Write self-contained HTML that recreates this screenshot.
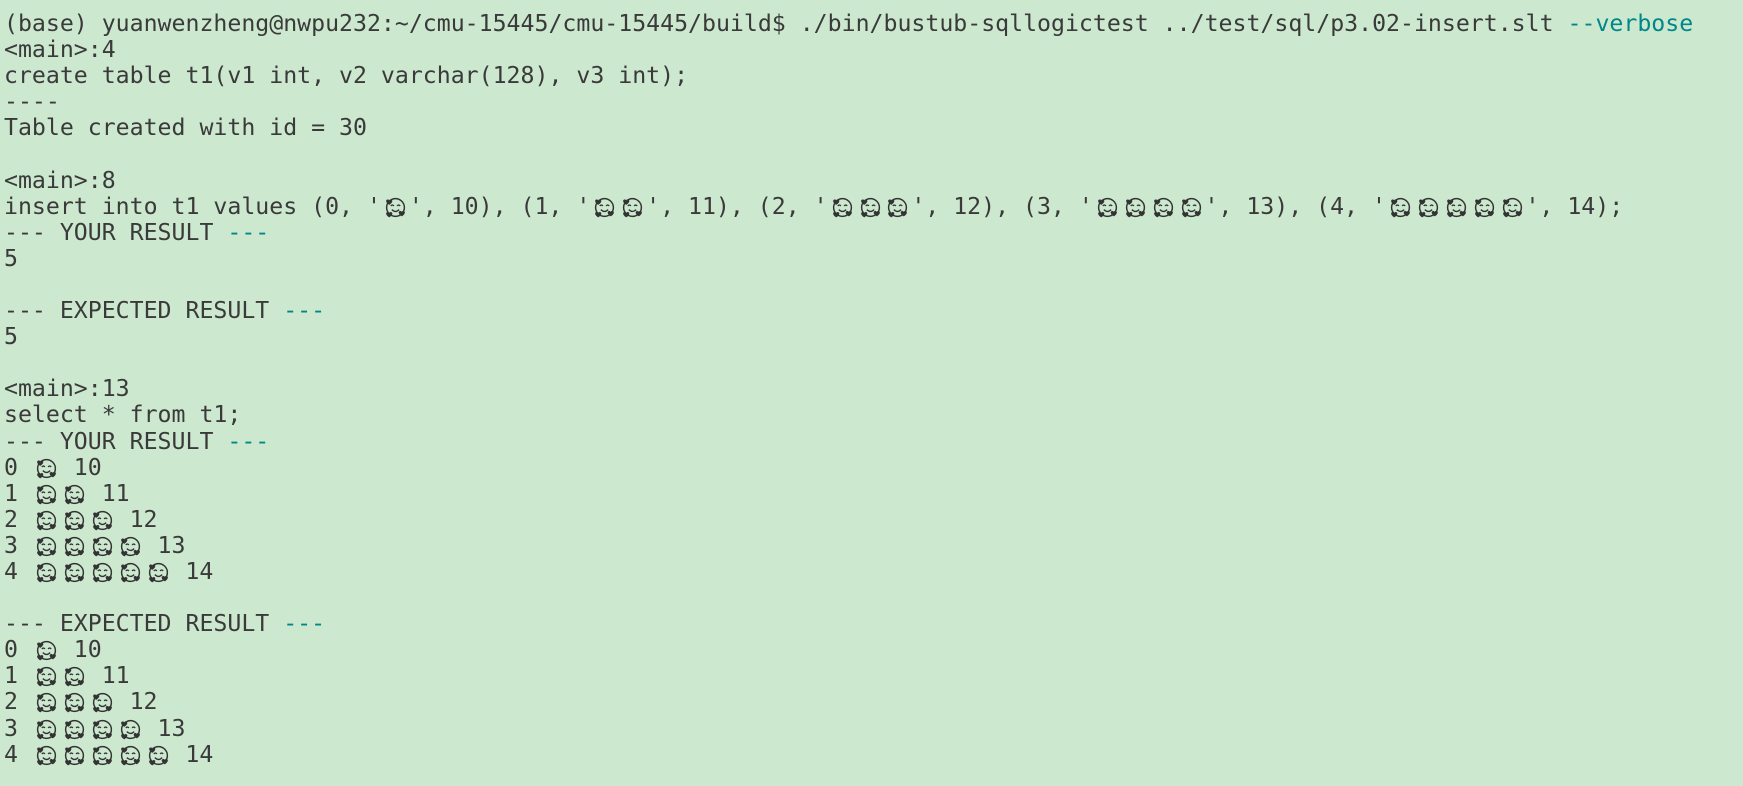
<!DOCTYPE html>
<html><head><meta charset="utf-8"><style>
html,body{margin:0;padding:0;background:#cce8cf;width:1743px;height:786px;overflow:hidden}
pre{margin:0;padding:11px 0 0 4px;font-family:"DejaVu Sans Mono","Liberation Mono",monospace;font-size:23.2px;line-height:26.1px;color:#3a3a3a}
.t{color:#00878a}
.e{display:inline-block;width:2ch;height:1em;position:relative;vertical-align:-0.18em}
.e svg{position:absolute;left:3px;top:1px;width:23px;height:23px}
</style></head><body>
<svg width="0" height="0" style="position:absolute"><defs><symbol id="em" viewBox="0 0 22 22"><circle cx="11" cy="11" r="8.5" fill="none" stroke="#333" stroke-width="1.4"/><path d="M6.5 9.5q1.5-1.6 3 0M12.5 9.5q1.5-1.6 3 0" fill="none" stroke="#333" stroke-width="1.3"/><path d="M7.5 13q3.5 3.5 7 0" fill="none" stroke="#333" stroke-width="1.3"/><path d="M2 4.5a1.6 1.6 0 0 1 3-.3a1.6 1.6 0 0 1 3 .3q0 2-3 4q-3-2-3-4z" fill="#333"/><path d="M2 16.5a1.6 1.6 0 0 1 3-.3a1.6 1.6 0 0 1 3 .3q0 2-3 4q-3-2-3-4z" fill="#333"/><path d="M14 15.5a1.6 1.6 0 0 1 3-.3a1.6 1.6 0 0 1 3 .3q0 2-3 4q-3-2-3-4z" fill="#333"/></symbol></defs></svg>
<pre>(base) yuanwenzheng@nwpu232:~/cmu-15445/cmu-15445/build$ ./bin/bustub-sqllogictest ../test/sql/p3.02-insert.slt <span class="t">--verbose</span>
&lt;main&gt;:4
create table t1(v1 int, v2 varchar(128), v3 int);
----
Table created with id = 30

&lt;main&gt;:8
insert into t1 values (0, '<span class="e"><svg><use href="#em"/></svg></span>', 10), (1, '<span class="e"><svg><use href="#em"/></svg></span><span class="e"><svg><use href="#em"/></svg></span>', 11), (2, '<span class="e"><svg><use href="#em"/></svg></span><span class="e"><svg><use href="#em"/></svg></span><span class="e"><svg><use href="#em"/></svg></span>', 12), (3, '<span class="e"><svg><use href="#em"/></svg></span><span class="e"><svg><use href="#em"/></svg></span><span class="e"><svg><use href="#em"/></svg></span><span class="e"><svg><use href="#em"/></svg></span>', 13), (4, '<span class="e"><svg><use href="#em"/></svg></span><span class="e"><svg><use href="#em"/></svg></span><span class="e"><svg><use href="#em"/></svg></span><span class="e"><svg><use href="#em"/></svg></span><span class="e"><svg><use href="#em"/></svg></span>', 14);
--- YOUR RESULT <span class="t">---</span>
5

--- EXPECTED RESULT <span class="t">---</span>
5

&lt;main&gt;:13
select * from t1;
--- YOUR RESULT <span class="t">---</span>
0 <span class="e"><svg><use href="#em"/></svg></span> 10
1 <span class="e"><svg><use href="#em"/></svg></span><span class="e"><svg><use href="#em"/></svg></span> 11
2 <span class="e"><svg><use href="#em"/></svg></span><span class="e"><svg><use href="#em"/></svg></span><span class="e"><svg><use href="#em"/></svg></span> 12
3 <span class="e"><svg><use href="#em"/></svg></span><span class="e"><svg><use href="#em"/></svg></span><span class="e"><svg><use href="#em"/></svg></span><span class="e"><svg><use href="#em"/></svg></span> 13
4 <span class="e"><svg><use href="#em"/></svg></span><span class="e"><svg><use href="#em"/></svg></span><span class="e"><svg><use href="#em"/></svg></span><span class="e"><svg><use href="#em"/></svg></span><span class="e"><svg><use href="#em"/></svg></span> 14

--- EXPECTED RESULT <span class="t">---</span>
0 <span class="e"><svg><use href="#em"/></svg></span> 10
1 <span class="e"><svg><use href="#em"/></svg></span><span class="e"><svg><use href="#em"/></svg></span> 11
2 <span class="e"><svg><use href="#em"/></svg></span><span class="e"><svg><use href="#em"/></svg></span><span class="e"><svg><use href="#em"/></svg></span> 12
3 <span class="e"><svg><use href="#em"/></svg></span><span class="e"><svg><use href="#em"/></svg></span><span class="e"><svg><use href="#em"/></svg></span><span class="e"><svg><use href="#em"/></svg></span> 13
4 <span class="e"><svg><use href="#em"/></svg></span><span class="e"><svg><use href="#em"/></svg></span><span class="e"><svg><use href="#em"/></svg></span><span class="e"><svg><use href="#em"/></svg></span><span class="e"><svg><use href="#em"/></svg></span> 14</pre>
</body></html>
